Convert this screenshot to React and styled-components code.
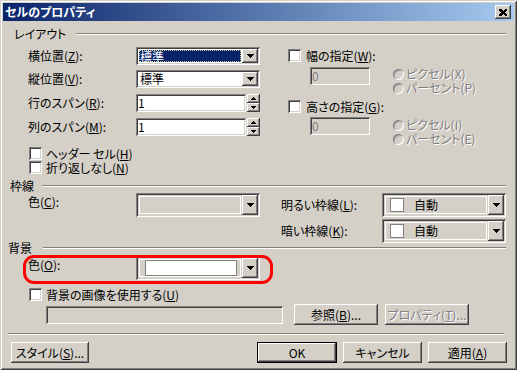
import React from 'react';
import styled, {createGlobalStyle} from 'styled-components';

const FACE = '#d4d0c8';
const NAVY = '#0a246a';

const GlobalStyle = createGlobalStyle`
  html, body { margin:0; padding:0; background:${FACE}; }
  body { font-family:"Noto Sans CJK JP", "Noto Sans", sans-serif; }
`;

const raised = `
  background:${FACE};
  box-shadow: inset -1px -1px #404040, inset 1px 1px #fff, inset -2px -2px #808080, inset 2px 2px ${FACE};
`;

const sunken = `
  box-shadow: inset 1px 1px #808080, inset -1px -1px #fff, inset 2px 2px #404040, inset -2px -2px ${FACE};
`;

const Window = styled.div`
  width:517px;
  height:370px;
  box-sizing:border-box;
  padding:3px;
  background:${FACE};
  box-shadow: inset 1px 1px ${FACE}, inset -1px -1px #404040, inset 2px 2px #fff, inset -2px -2px #808080;
  display:flex;
  flex-direction:column;
  font-size:12px;
  line-height:14px;
  font-feature-settings:"palt";
  color:#000;
`;

const TitleBar = styled.div`
  height:18px;
  display:flex;
  align-items:center;
  justify-content:space-between;
  padding:0 3px 0 2px;
  background:linear-gradient(to right, ${NAVY}, #a6caf0);
  color:#fff;
  font-weight:bold;
`;

const CloseBtn = styled.div`
  width:16px;
  height:14px;
  ${raised}
  display:flex;
  align-items:center;
  justify-content:center;
`;

const Body = styled.div`
  flex:1;
  display:flex;
  flex-direction:column;
`;

const Heading = styled.div`
  display:grid;
  grid-template-columns:${p => p.$w}px 1fr;
  align-items:center;
  height:14px;
  margin:${p => p.$mt}px 8px 0 ${p => p.$x - 3}px;
  &::after {
    content:"";
    height:0;
    border-top:1px solid #808080;
    border-bottom:1px solid #fff;
  }
`;

const U = styled.span`
  text-decoration:underline;
  text-underline-offset:1px;
`;

const Area = styled.div`
  display:flex;
  align-items:flex-start;
  margin:${p => p.$mt || 0}px 0 0 ${p => p.$ml}px;
  position:relative;
`;

const Column = styled.div`
  display:flex;
  flex-direction:column;
  width:${p => p.$w ? `${p.$w}px` : 'auto'};
  margin-left:${p => p.$ml || 0}px;
`;

const FieldRow = styled.div`
  display:grid;
  grid-template-columns:${p => p.$cols || '108px 124px'};
  align-items:${p => p.$top ? 'start' : 'center'};
  height:${p => p.$h || 18}px;
  margin-top:${p => p.$mt || 0}px;
`;

const Label = styled.span`
  white-space:nowrap;
  padding-top:${p => p.$pt || 0}px;
`;

const Combo = styled.div`
  box-sizing:border-box;
  width:${p => p.$w}px;
  height:${p => p.$h}px;
  padding:2px;
  display:flex;
  background:${p => p.$bg || '#fff'};
  ${sunken}
`;

const ComboText = styled.div`
  box-sizing:border-box;
  width:${p => p.$w}px;
  margin:1px;
  padding-left:1px;
  line-height:12px;
  white-space:nowrap;
  color:#000;
`;

const Highlight = styled(ComboText)`
  background-color:${NAVY};
  color:#fff;
  border:1px dotted #c8c890;
  padding-left:0;
`;

const DropBtn = styled.div`
  width:16px;
  margin-left:auto;
  ${raised}
  display:flex;
  align-items:center;
  justify-content:center;
`;

const Arrow = ({w = 7, h = 4, up}) => (
  <svg width={w} height={h} shapeRendering="crispEdges" style={{display: 'block'}}>
    <polygon points={up ? `0,${h} ${w},${h} ${w / 2},0` : `0,0 ${w},0 ${w / 2},${h}`} fill="#000"/>
  </svg>
);

const Input = styled.div`
  box-sizing:border-box;
  width:${p => p.$w}px;
  height:${p => p.$h || 18}px;
  margin-left:${p => p.$ml || 0}px;
  padding:2px 2px 0;
  background:${p => p.$disabled ? FACE : '#fff'};
  color:${p => p.$disabled ? '#808080' : '#000'};
  line-height:14px;
  ${sunken}
`;

const SpinBox = styled.div`
  display:flex;
  gap:1px;
`;

const Spin = styled.div`
  width:13px;
  height:18px;
  display:flex;
  flex-direction:column;
`;

const SpinBtn = styled.div`
  flex:1;
  ${raised}
  display:flex;
  align-items:center;
  justify-content:center;
`;

const CheckRow = styled.div`
  display:flex;
  align-items:center;
  gap:${p => p.$gap || 4}px;
  height:13px;
  line-height:12px;
  margin:${p => p.$mt || 0}px 0 0 ${p => p.$ml || 0}px;
  white-space:nowrap;
`;

const Box = styled.span`
  width:13px;
  height:13px;
  flex:none;
  box-sizing:border-box;
  background:#fff;
  ${sunken}
`;

const SpecRow = styled.div`
  display:flex;
  align-items:flex-start;
  margin-top:${p => p.$mt || 0}px;
`;

const Radios = styled.div`
  display:flex;
  flex-direction:column;
  margin:${p => p.$mt || 0}px 0 0 23px;
`;

const RadioRow = styled.div`
  display:flex;
  align-items:center;
  gap:2px;
  height:14px;
  line-height:12px;
  white-space:nowrap;
`;

const Radio = styled.span`
  width:11px;
  height:11px;
  border-radius:50%;
  box-sizing:border-box;
  background:${FACE};
  box-shadow: inset 1px 1px #808080, inset -1px -1px #fff, inset 2px 2px #b0b0b0;
`;

const Dim = styled.span`
  color:#808080;
  text-shadow:1px 1px 0 #fff;
`;

const ColorInner = styled.div`
  box-sizing:border-box;
  width:${p => p.$w}px;
  margin:1px;
  border:1px solid #fff;
  display:flex;
  align-items:center;
`;

const Swatch = styled.span`
  box-sizing:border-box;
  width:${p => p.$w || 14}px;
  height:${p => p.$h || 14}px;
  margin-left:${p => p.$ml || 4}px;
  margin-right:${p => p.$mr || 0}px;
  background:#fff;
  border:1px solid #808080;
`;

const Ring = styled.div`
  position:absolute;
  left:-5px;
  top:-1px;
  width:250px;
  height:29px;
  box-sizing:border-box;
  border:3px solid #f00;
  border-radius:11px;
  pointer-events:none;
`;

const FileRow = styled.div`
  display:flex;
  align-items:center;
  margin:3px 0 0 43px;
  height:21px;
`;

const Button = styled.div`
  box-sizing:border-box;
  width:${p => p.$w}px;
  height:21px;
  margin-left:${p => p.$ml || 0}px;
  ${raised}
  display:flex;
  align-items:center;
  justify-content:center;
  white-space:nowrap;
  ${p => p.$default && `
    border:1px solid #000;
    box-shadow: inset -1px -1px #404040, inset 1px 1px #fff, inset -2px -2px #808080;
  `}
`;

const Separator = styled.div`
  height:0;
  margin:8px 10px 0 5px;
  border-top:1px solid #808080;
  border-bottom:1px solid #fff;
`;

const ButtonRow = styled.div`
  display:flex;
  margin:7px 7px 0 8px;
`;

const Spacer = styled.div`
  flex:1;
`;

// text area of a 124px combo: 124 - 4 border - 16 button - 2 margin
const TEXT_W = 102;

const DropCombo = ({w = 124, h = 18, bg, children}) => (
  <Combo $w={w} $h={h} $bg={bg}>
    {children}
    <DropBtn><Arrow/></DropBtn>
  </Combo>
);

const SpinField = ({value}) => (
  <SpinBox>
    <Input $w={110}>{value}</Input>
    <Spin>
      <SpinBtn><Arrow w={5} h={3} up/></SpinBtn>
      <SpinBtn><Arrow w={5} h={3}/></SpinBtn>
    </Spin>
  </SpinBox>
);

const Spec = ({mt, radioMt, a, b}) => (
  <SpecRow $mt={mt}>
    <Input $w={60} $ml={22} $disabled>0</Input>
    <Radios $mt={radioMt}>
      <RadioRow><Radio/><Dim>{a}</Dim></RadioRow>
      <RadioRow><Radio/><Dim>{b}</Dim></RadioRow>
    </Radios>
  </SpecRow>
);

export default function App() {
  return (
    <>
      <GlobalStyle/>
      <Window>
        <TitleBar>
          <span>セルのプロパティ</span>
          <CloseBtn>
            <svg width="8" height="7" shapeRendering="crispEdges">
              <path d="M0 0h2l2 2 2-2h2v1L6 3.5 8 6v1H6L4 5 2 7H0V6l2-2.5L0 1z" fill="#000"/>
            </svg>
          </CloseBtn>
        </TitleBar>
        <Body>
          <Heading $x={14} $w={62} $mt={6}>レイアウト</Heading>
          <Area $ml={25} $mt={6}>
            <Column $w={232}>
              <FieldRow>
                <Label>横位置(<U>Z</U>):</Label>
                <DropCombo>
                  <Highlight $w={TEXT_W}>標準</Highlight>
                </DropCombo>
              </FieldRow>
              <FieldRow $mt={5}>
                <Label>縦位置(<U>V</U>):</Label>
                <DropCombo>
                  <ComboText $w={TEXT_W}>標準</ComboText>
                </DropCombo>
              </FieldRow>
              <FieldRow $mt={6}>
                <Label>行のスパン(<U>R</U>):</Label>
                <SpinField value="1"/>
              </FieldRow>
              <FieldRow $mt={6}>
                <Label>列のスパン(<U>M</U>):</Label>
                <SpinField value="1"/>
              </FieldRow>
              <CheckRow $mt={11} $ml={1}><Box/><span>ヘッダー セル(<U>H</U>)</span></CheckRow>
              <CheckRow $mt={1} $ml={1}><Box/><span>折り返しなし(<U>N</U>)</span></CheckRow>
            </Column>
            <Column $ml={28}>
              <CheckRow $mt={2} $gap={5}><Box/><span>幅の指定(<U>W</U>):</span></CheckRow>
              <Spec mt={5} a="ピクセル(X)" b="パーセント(P)"/>
              <CheckRow $mt={5} $gap={5}><Box/><span>高さの指定(<U>G</U>):</span></CheckRow>
              <Spec mt={4} radioMt={1} a="ピクセル(I)" b="パーセント(E)"/>
            </Column>
          </Area>

          <Heading $x={10} $w={32} $mt={5}>枠線</Heading>
          <Area $ml={25}>
            <Column $w={232}>
              <FieldRow $h={24} $top>
                <Label $pt={2}>色(<U>C</U>):</Label>
                <DropCombo h={24} bg={FACE}><ColorInner $w={TEXT_W}/></DropCombo>
              </FieldRow>
            </Column>
            <Column $ml={21}>
              <FieldRow $h={24} $cols="101px 124px">
                <Label>明るい枠線(<U>L</U>):</Label>
                <DropCombo h={24} bg={FACE}>
                  <ColorInner $w={TEXT_W}><Swatch $mr={10}/><span>自動</span></ColorInner>
                </DropCombo>
              </FieldRow>
              <FieldRow $h={24} $mt={2} $cols="101px 124px">
                <Label>暗い枠線(<U>K</U>):</Label>
                <DropCombo h={24} bg={FACE}>
                  <ColorInner $w={TEXT_W}><Swatch $mr={10}/><span>自動</span></ColorInner>
                </DropCombo>
              </FieldRow>
            </Column>
          </Area>

          <Heading $x={8} $w={35} $mt={-2}>背景</Heading>
          <Area $ml={25} $mt={1}>
            <FieldRow $h={24} $top>
              <Label $pt={2}>色(<U>O</U>):</Label>
              <DropCombo h={24} bg={FACE}>
                <ColorInner $w={TEXT_W}><Swatch $w={92} $h={16} $ml={5}/></ColorInner>
              </DropCombo>
            </FieldRow>
            <Ring/>
          </Area>
          <CheckRow $mt={8} $ml={26}><Box/><span>背景の画像を使用する(<U>U</U>)</span></CheckRow>
          <FileRow>
            <Input $w={237} $disabled/>
            <Button $w={84} $ml={11}><span>参照(<U>B</U>)...</span></Button>
            <Button $w={84} $ml={7}><Dim>プロパティ(<U>T</U>)...</Dim></Button>
          </FileRow>

          <Separator/>
          <ButtonRow>
            <Button $w={78}><span>スタイル(<U>S</U>)...</span></Button>
            <Spacer/>
            <Button $w={80} $default>OK</Button>
            <Button $w={79} $ml={6}>キャンセル</Button>
            <Button $w={79} $ml={6}><span>適用(<U>A</U>)</span></Button>
          </ButtonRow>
        </Body>
      </Window>
    </>
  );
}
